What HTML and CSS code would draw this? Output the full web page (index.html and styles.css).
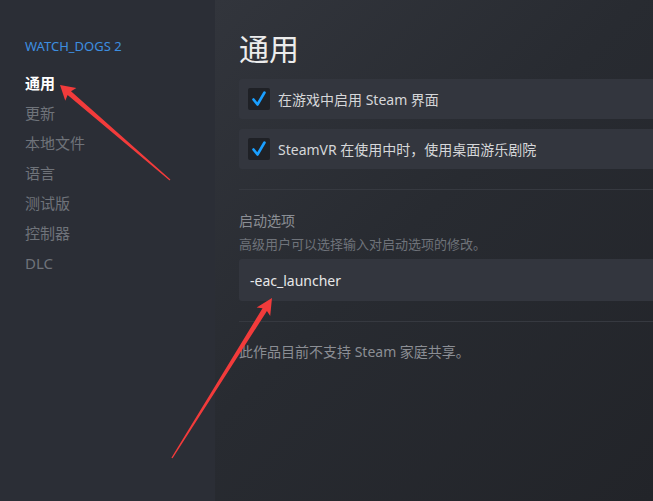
FILE: index.html
```html
<!DOCTYPE html>
<html lang="zh-CN">
<head>
    <meta charset="UTF-8">
    <title>WATCH_DOGS 2 - 属性</title>
    <link rel="stylesheet" href="styles.css">
</head>
<body>
    <!-- Left column -->
    <aside class="sidebar">
        <div class="game-title">WATCH_DOGS 2</div>
        <ul class="nav">
            <li class="nav-item active">通用</li>
            <li class="nav-item">更新</li>
            <li class="nav-item">本地文件</li>
            <li class="nav-item">语言</li>
            <li class="nav-item">测试版</li>
            <li class="nav-item">控制器</li>
            <li class="nav-item">DLC</li>
        </ul>
    </aside>

    <!-- Settings panel -->
    <main class="panel">
        <h1 class="panel-title">通用</h1>

        <label class="toggle-row">
            <span class="checkbox">
                <svg viewBox="0 0 22 22" width="22" height="22"><path d="M5.5 11.5 L9.5 16.5 L16.5 4.5" fill="none" stroke="#1a9fff" stroke-width="2.6" stroke-linecap="round" stroke-linejoin="round"/></svg>
            </span>
            <span class="toggle-text">在游戏中启用 Steam 界面</span>
        </label>

        <label class="toggle-row">
            <span class="checkbox">
                <svg viewBox="0 0 22 22" width="22" height="22"><path d="M5.5 11.5 L9.5 16.5 L16.5 4.5" fill="none" stroke="#1a9fff" stroke-width="2.6" stroke-linecap="round" stroke-linejoin="round"/></svg>
            </span>
            <span class="toggle-text">SteamVR 在使用中时，使用桌面游乐剧院</span>
        </label>

        <div class="divider"></div>

        <div class="field-label">启动选项</div>
        <div class="field-hint">高级用户可以选择输入对启动选项的修改。</div>
        <div class="text-input">-eac_launcher</div>

        <div class="divider"></div>

        <p class="footnote">此作品目前不支持 Steam 家庭共享。</p>
    </main>

    <!-- Red annotation arrows -->
    <svg class="annotations" width="653" height="501" viewBox="0 0 653 501">
        <g transform="translate(170 180) rotate(-139.2)">
            <polygon points="0,-0.6 133,-2.6 131,-8.5 145.3,0 131,8.5 133,2.6 0,0.6" fill="#f23b3b"/>
        </g>
        <g transform="translate(172 458) rotate(-58)">
            <polygon points="0,-0.7 175,-2.6 172.5,-8 188.7,0 172.5,8 175,2.6 0,0.7" fill="#f23b3b"/>
        </g>
    </svg>
</body>
</html>
```

FILE: styles.css
```css
* {
    margin: 0;
    padding: 0;
    box-sizing: border-box;
}

body {
    font-family: "Noto Sans", "Noto Sans CJK SC", sans-serif;
    width: 653px;
    height: 501px;
    overflow: hidden;
    display: flex;
    position: relative;
    background-color: #25272d;
}

/* Sidebar */
.sidebar {
    width: 215px;
    flex-shrink: 0;
    background-color: #2b2e36;
    padding: 37px 0 0 25px;
}

.game-title {
    font-size: 13px;
    line-height: 18px;
    color: #3d8ee0;
    margin-bottom: 13px;
}

.nav {
    list-style: none;
}

.nav-item {
    font-size: 15px;
    line-height: 30px;
    color: #6f737a;
}

.nav-item.active {
    color: #ffffff;
    font-weight: 700;
}

/* Main panel */
.panel {
    flex: 1;
    padding: 29px 0 0 24px;
    background: linear-gradient(135deg, #32353c 0%, #282b31 45%, #222429 100%);
}

.panel-title {
    font-size: 30px;
    font-weight: 400;
    line-height: 40px;
    color: #ececec;
    margin-bottom: 10px;
}

.toggle-row {
    display: flex;
    align-items: center;
    height: 40px;
    padding-left: 9px;
    gap: 8px;
    margin-bottom: 10px;
    background-color: #33363e;
    border-radius: 3px 0 0 3px;
}

.checkbox {
    width: 22px;
    height: 22px;
    background-color: #1f2126;
    border-radius: 2px;
    display: flex;
}

.toggle-text {
    font-size: 14px;
    color: #d6d7d9;
}

.divider {
    height: 1px;
    background-color: #363940;
    margin-top: 20px;
}

.field-label {
    margin-top: 21px;
    font-size: 14px;
    line-height: 20px;
    color: #8b8e94;
}

.field-hint {
    margin-top: 3px;
    font-size: 13px;
    line-height: 20px;
    color: #6f737a;
}

.text-input {
    margin-top: 5px;
    height: 42px;
    display: flex;
    align-items: center;
    padding-left: 11px;
    font-size: 14px;
    color: #e6e7e8;
    background-color: #33363e;
    border-radius: 3px 0 0 3px;
}

.footnote {
    margin-top: 20px;
    font-size: 14px;
    line-height: 20px;
    color: #8b8e94;
}

/* Overlay annotations */
.annotations {
    position: absolute;
    top: 0;
    left: 0;
    pointer-events: none;
}
```
